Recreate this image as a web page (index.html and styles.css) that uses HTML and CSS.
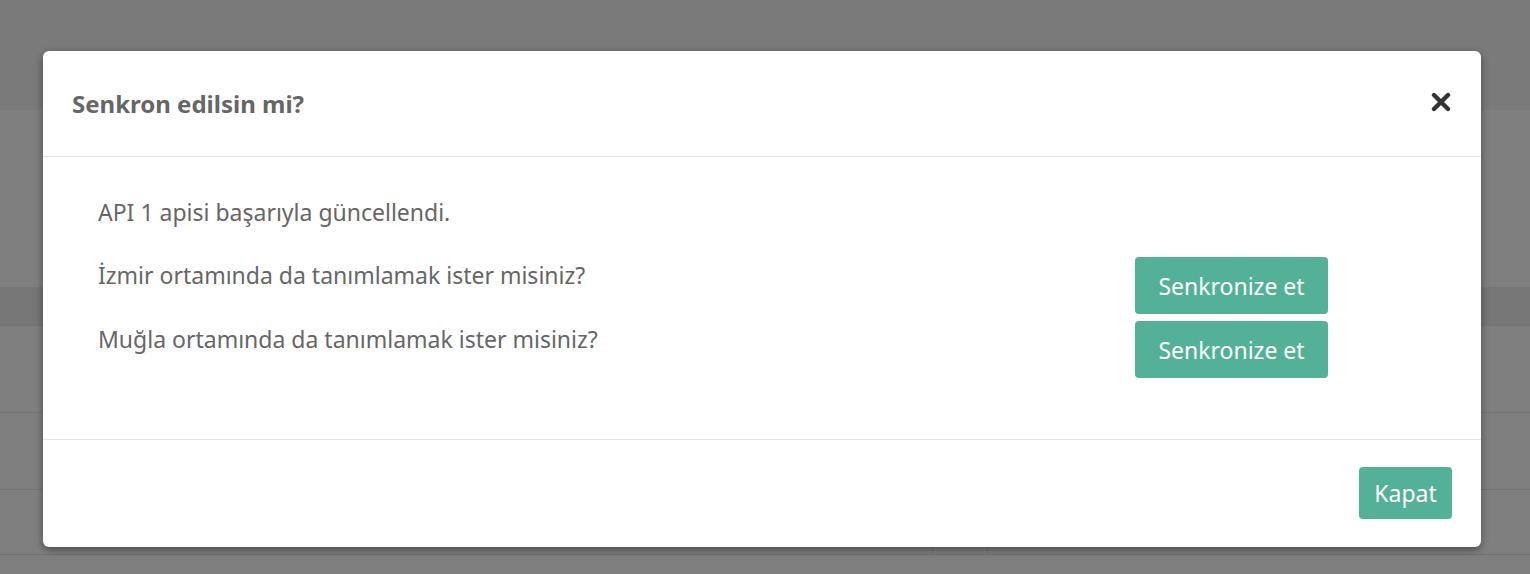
FILE: index.html
```html
<!DOCTYPE html>
<html lang="tr">
<head>
<meta charset="utf-8">
<title>Senkron</title>
<link rel="stylesheet" href="styles.css">
</head>
<body>
<div class="page">
  <div class="bg-header"></div>
  <div class="bg-section"></div>
  <div class="bg-band"></div>
  <div class="bg-row"></div>
  <div class="bg-row"></div>
  <div class="bg-row bg-row-cells"><span class="bg-cell"></span></div>
  <div class="bg-row bg-row-last"></div>
</div>
<div class="overlay"></div>
<div class="modal">
  <div class="modal-header">
    <h4 class="modal-title">Senkron edilsin mi?</h4>
    <button class="close" aria-label="Kapat">
      <svg width="20" height="20" viewBox="0 0 20 20"><path d="M3 3 L17 17 M17 3 L3 17" stroke="#333" stroke-width="4.4" stroke-linecap="round"/></svg>
    </button>
  </div>
  <div class="modal-body">
    <p class="msg first">API 1 apisi başarıyla güncellendi.</p>
    <div class="sync-row">
      <p class="msg">İzmir ortamında da tanımlamak ister misiniz?</p>
      <button class="btn">Senkronize et</button>
    </div>
    <div class="sync-row">
      <p class="msg">Muğla ortamında da tanımlamak ister misiniz?</p>
      <button class="btn">Senkronize et</button>
    </div>
  </div>
  <div class="modal-footer">
    <button class="btn btn-close">Kapat</button>
  </div>
</div>
</body>
</html>
```
FILE: styles.css
```css
* { box-sizing: border-box; }
html, body { margin: 0; padding: 0; }
body {
  width: 1530px;
  height: 574px;
  overflow: hidden;
  background: #fff;
  font-family: "Noto Sans", "Open Sans", sans-serif;
  position: relative;
}
.page { display: flex; flex-direction: column; height: 574px; overflow: hidden; }
.bg-header { height: 110px; flex: none; background: #f4f4f4; }
.bg-section { height: 177px; flex: none; background: #fefefe; }
.bg-band { height: 39px; flex: none; background: #efefef; border-bottom: 1px solid #e6e6e6; }
.bg-row { height: 87px; flex: none; border-bottom: 1px solid #e6e6e6; background: #fff; }
.bg-row:nth-of-type(5) { height: 77px; }
.bg-row-cells { height: 65px; position: relative; }
.bg-cell { position: absolute; left: 932px; width: 56px; bottom: 0; height: 30px; border-left: 1px solid #e6e6e6; border-right: 1px solid #e6e6e6; }
.bg-row-last { height: 19px; border-bottom: none; }

.overlay { position: absolute; inset: 0; background: rgba(0,0,0,0.5); }

.modal {
  position: absolute;
  left: 43px;
  top: 51px;
  width: 1438px;
  height: 496px;
  background: #fff;
  border-radius: 6px;
  box-shadow: 0 3px 9px rgba(0,0,0,0.4);
  display: flex;
  flex-direction: column;
  color: #666;
}
.modal-header {
  height: 106px;
  border-bottom: 1px solid #e5e5e5;
  display: flex;
  align-items: center;
  justify-content: space-between;
  padding: 0 30px 0 29px;
}
.modal-title {
  margin: 0;
  font-size: 24px;
  font-weight: 700;
  color: #666;
}
.close {
  border: none;
  background: none;
  padding: 0;
  width: 20px;
  height: 20px;
  margin-top: -4px;
  display: flex;
}
.modal-body {
  height: 283px;
  border-bottom: 1px solid #e5e5e5;
  padding: 37px 153px 0 55px;
}
.msg {
  margin: 0;
  font-size: 23px;
  line-height: 36px;
}
.msg.first { margin-bottom: 27px; }
.sync-row {
  display: flex;
  justify-content: space-between;
  align-items: flex-start;
  margin-bottom: 7px;
}
.btn {
  font-family: inherit;
  background: #53b197;
  color: #fff;
  border: none;
  border-radius: 4px;
  font-size: 23px;
  width: 193px;
  height: 57px;
  padding: 0;
}
.modal-footer {
  flex: 1;
  display: flex;
  justify-content: flex-end;
  align-items: flex-start;
  padding: 27px 29px 0 0;
}
.btn-close { width: 93px; height: 52px; }
```
